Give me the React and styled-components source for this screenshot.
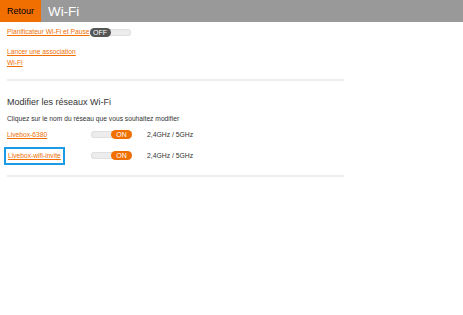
import React from 'react';
import styled, { createGlobalStyle } from 'styled-components';

const GlobalStyle = createGlobalStyle`
    body {
        margin: 0;
        background: #fff;
        font-family: "Liberation Sans", Arial, sans-serif;
    }
`;

const Header = styled.div`
    display: flex;
    height: 22px;
    background: #999;
`;

const Back = styled.div`
    display: flex;
    align-items: center;
    width: 41px;
    padding-left: 7px;
    box-sizing: border-box;
    background: #f16e00;
    color: #000;
    font-size: 9px;
`;

const Title = styled.h1`
    display: flex;
    align-items: center;
    margin: 0;
    padding-left: 7px;
    color: #fff;
    font-size: 13.4px;
    font-weight: 400;
`;

const Content = styled.div`
    width: 337px;
    padding: 0 7px;
    font-size: 6.7px;
`;

const Link = styled.a`
    color: #f16e00;
    font-size: 6.7px;
    text-decoration: underline;
    cursor: pointer;
    ${p => p.$focused && `
        display: inline-block;
        padding: 3px 2px;
        margin-left: -3px;
        line-height: 8px;
        border: 2px solid #1a9be6;
    `}
`;

const ScheduleRow = styled.div`
    display: flex;
    align-items: flex-end;
    height: 9px;
    margin-top: 5px;
    line-height: 8px;
`;

const Assoc = styled.div`
    width: 80px;
    margin-top: 11px;
    line-height: 10.5px;
`;

const Separator = styled.hr`
    height: 2px;
    margin: ${p => p.$top}px 0 0;
    border: 0;
    background: #eee;
`;

const Heading = styled.h2`
    margin: 16px 0 0;
    color: #333;
    font-size: 9px;
    font-weight: 400;
`;

const Hint = styled.p`
    margin: 8px 0 2px;
    color: #333;
    font-size: 6.7px;
`;

const NetRow = styled.div`
    display: grid;
    grid-template-columns: 84px 56px auto;
    align-items: center;
    height: 21px;
`;

const Bands = styled.span`
    color: #333;
    font-size: 6.8px;
`;

const Track = styled.div`
    display: flex;
    justify-content: ${p => (p.$on ? 'flex-end' : 'flex-start')};
    width: 41px;
    height: 7px;
    border-radius: 4px;
    background: #ececec;
    box-shadow: inset 0 0 0 1px #e0e0e0;
`;

const Knob = styled.div`
    display: flex;
    align-items: center;
    justify-content: center;
    width: 21px;
    height: 9px;
    margin-top: -1px;
    border-radius: 5px;
    background: ${p => (p.$on ? '#f16e00' : '#555')};
    color: #fff;
    font-size: 7px;
`;

const Toggle = ({ on }) => (
    <Track $on={on}>
        <Knob $on={on}>{on ? 'ON' : 'OFF'}</Knob>
    </Track>
);

const networks = [
    { name: 'Livebox-6380' },
    { name: 'Livebox-wifi-invite', focused: true },
];

const App = () => (
    <>
        <GlobalStyle />
        <Header>
            <Back>Retour</Back>
            <Title>Wi-Fi</Title>
        </Header>
        <Content>
            <ScheduleRow>
                <Link>Planificateur Wi-Fi et Pause</Link>
                <Toggle on={false} />
            </ScheduleRow>
            <Assoc>
                <Link>Lancer une association Wi-Fi</Link>
            </Assoc>
            <Separator $top={11} />
            <Heading>Modifier les réseaux Wi-Fi</Heading>
            <Hint>Cliquez sur le nom du réseau que vous souhaitez modifier</Hint>
            {networks.map(n => (
                <NetRow key={n.name}>
                    <div><Link $focused={n.focused}>{n.name}</Link></div>
                    <Toggle on />
                    <Bands>2,4GHz / 5GHz</Bands>
                </NetRow>
            ))}
            <Separator $top={9} />
        </Content>
    </>
);

export default App;
